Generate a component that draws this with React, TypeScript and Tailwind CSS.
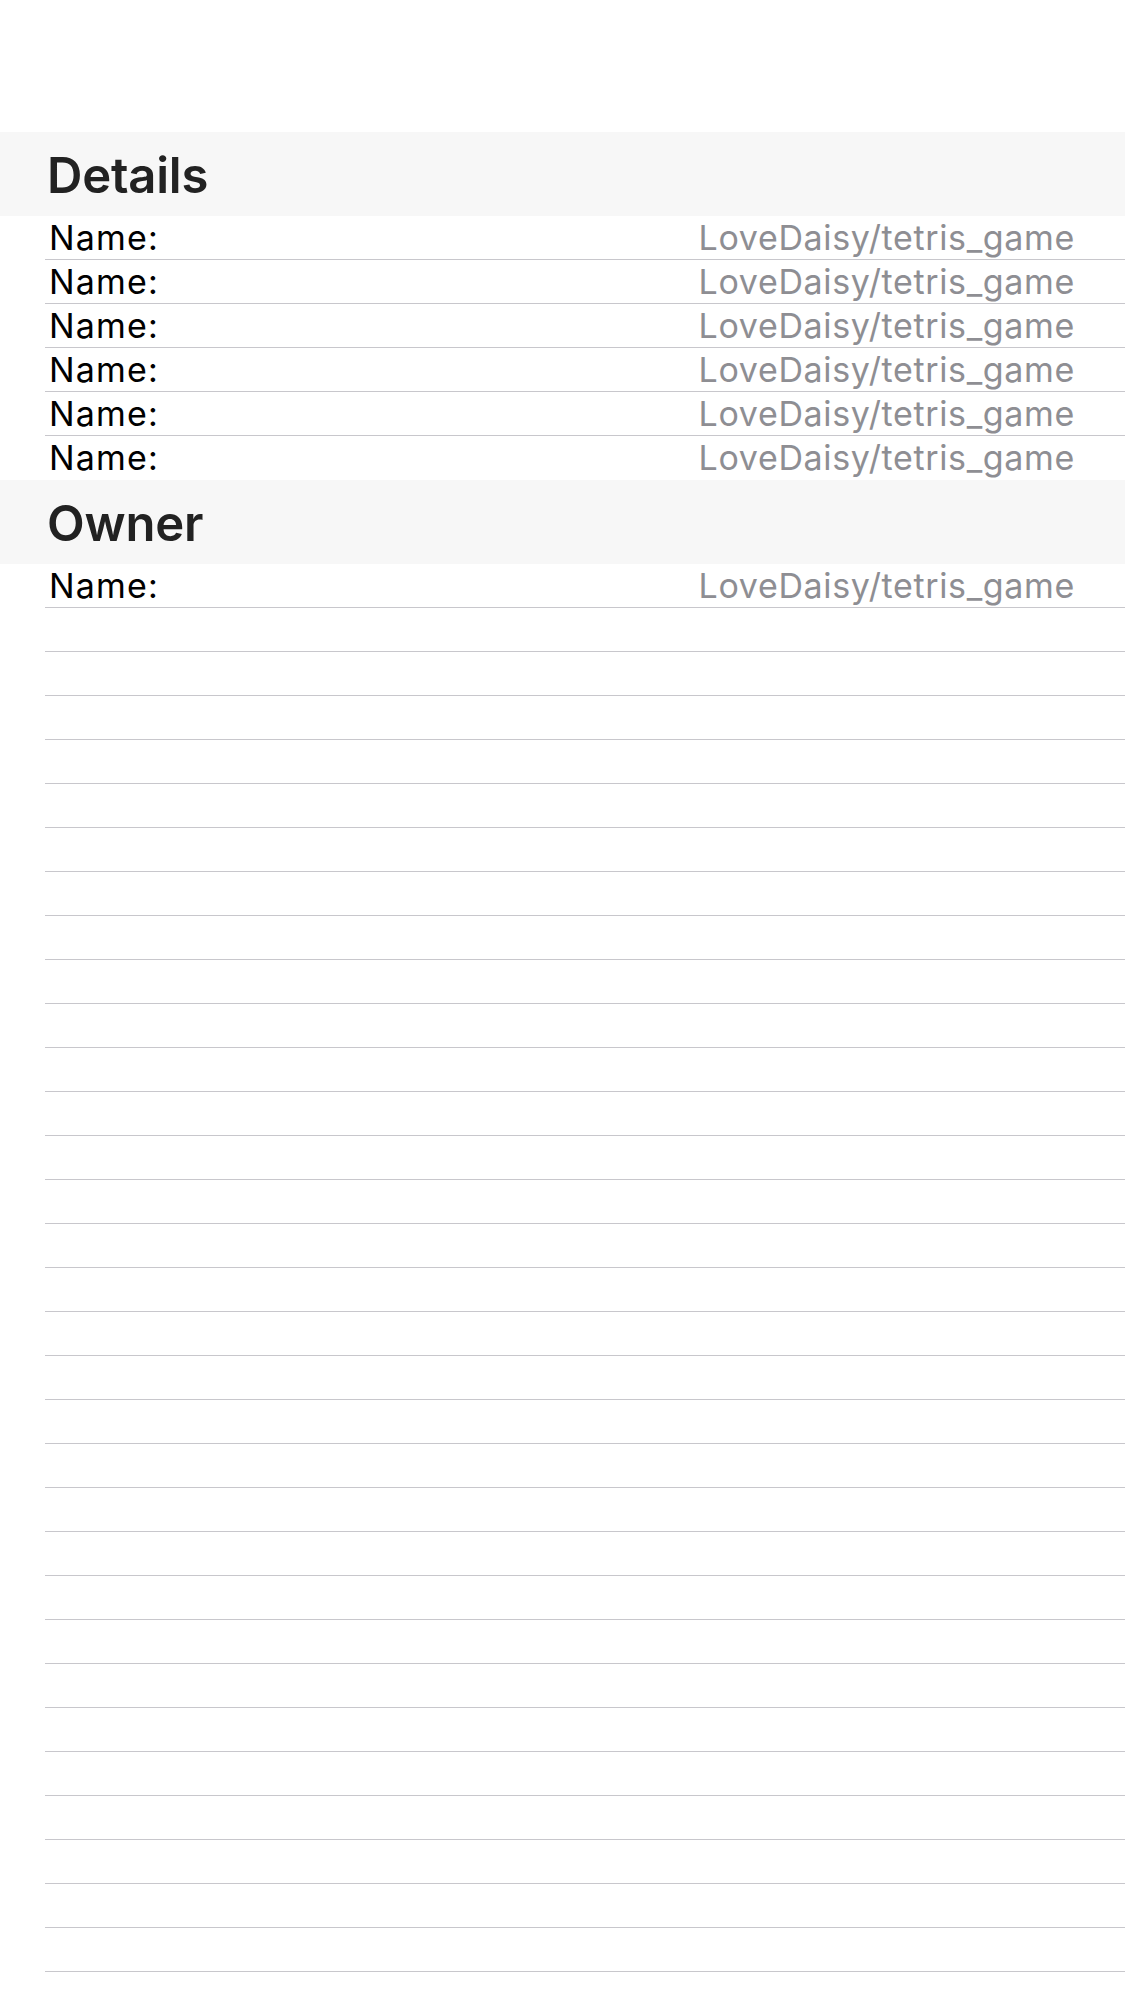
import React from 'react';

const font = { fontFamily: 'Inter, "Noto Sans", sans-serif' };

const SectionHeader: React.FC<{ title: string }> = ({ title }) => (
  <div className="h-[84px] bg-[#f7f7f7] flex items-center pl-[47px] pt-[4px]">
    <h2 className="text-[49px] font-semibold text-[#222222] tracking-[-0.2px]">{title}</h2>
  </div>
);

const Row: React.FC<{ label?: string; value?: string; last?: boolean }> = ({ label, value, last }) => (
  <div
    className={
      'ml-[45px] h-[44px] flex items-center justify-between pl-[4px] pr-[50px] ' +
      (last ? '' : 'border-b border-[#c8c7cc]')
    }
  >
    {label && <span className="text-[34px] leading-none tracking-[1.2px] text-black">{label}</span>}
    {value && <span className="text-[34px] leading-none tracking-[0.65px] text-[#8e8e93]">{value}</span>}
  </div>
);

export default function App() {
  const details = Array.from({ length: 6 });
  const empty = Array.from({ length: 32 });

  return (
    <div className="w-[1125px] h-[2001px] overflow-hidden bg-white pt-[132px]" style={font}>
      <SectionHeader title="Details" />
      {details.map((_, i) => (
        <Row key={i} label="Name:" value="LoveDaisy/tetris_game" last={i === details.length - 1} />
      ))}
      <SectionHeader title="Owner" />
      <Row label="Name:" value="LoveDaisy/tetris_game" />
      {empty.map((_, i) => (
        <Row key={i} />
      ))}
    </div>
  );
}
